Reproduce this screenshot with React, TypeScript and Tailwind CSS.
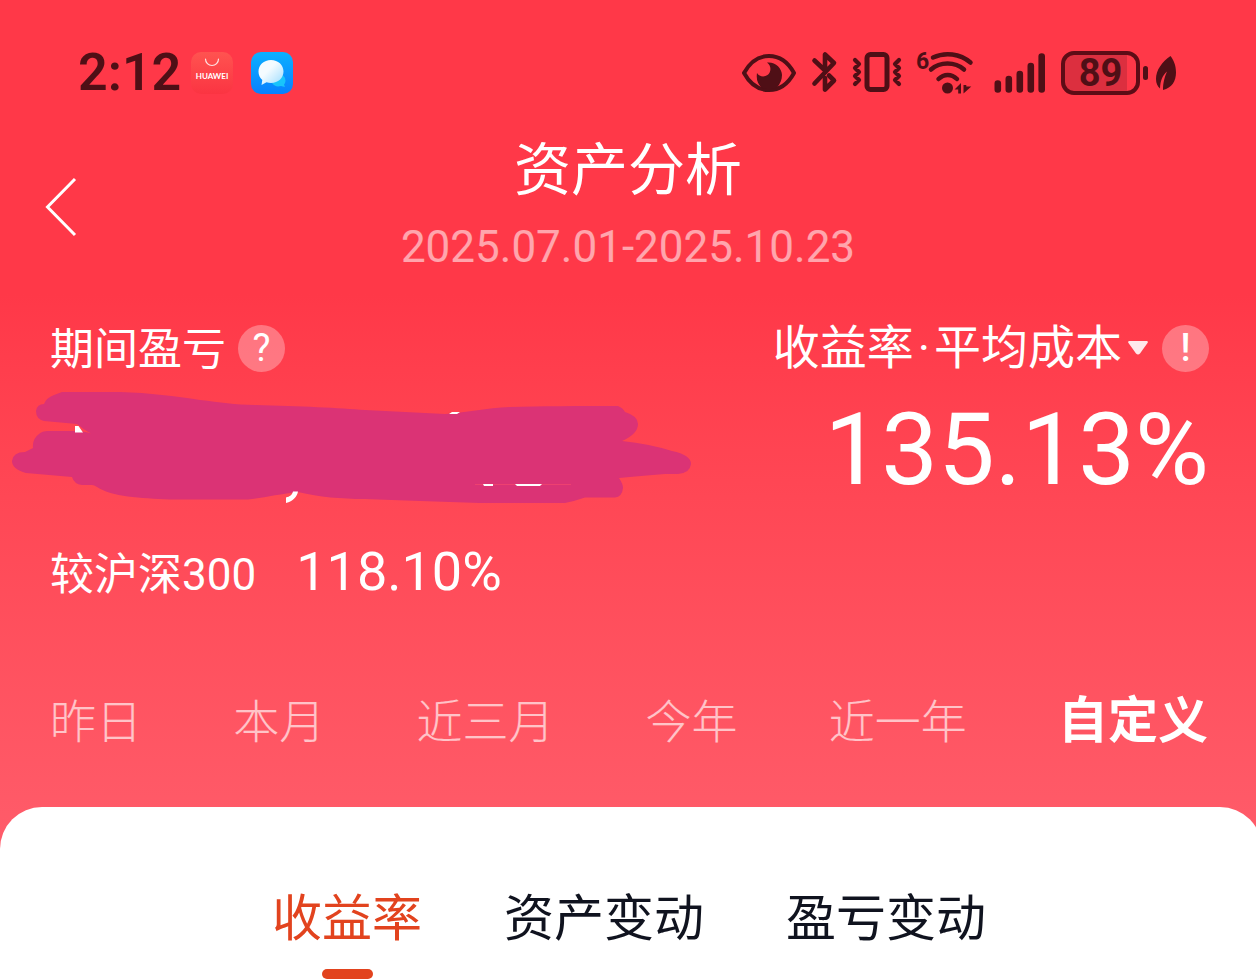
import React, { useState } from 'react';

const PERIODS = ['昨日', '本月', '近三月', '今年', '近一年', '自定义'];
const SECTIONS = ['收益率', '资产变动', '盈亏变动'];

const HuaweiIcon = () => (
  <svg viewBox="0 0 42 42" className="h-[42px] w-[42px]" aria-hidden="true">
    <defs>
      <linearGradient id="huawei" x1="0" y1="0" x2="0" y2="1">
        <stop offset="0" stopColor="#ff5350" />
        <stop offset="1" stopColor="#fb3442" />
      </linearGradient>
    </defs>
    <rect width="42" height="42" rx="10" fill="url(#huawei)" />
    <path d="M14.5 7a6.5 6.5 0 0 0 13 0" fill="none" stroke="#ffe3e3" strokeWidth="1.2" strokeLinecap="round" />
    <text x="21" y="27" textAnchor="middle" fontSize="8" fontWeight="700" fill="#fff" fontFamily="Lato, sans-serif">HUAWEI</text>
  </svg>
);

const MessagesIcon = () => (
  <svg viewBox="0 0 42 42" className="h-[42px] w-[42px]" aria-hidden="true">
    <defs>
      <linearGradient id="msgBg" x1="0" y1="0" x2="0" y2="1">
        <stop offset="0" stopColor="#0cb0ff" />
        <stop offset="1" stopColor="#0880ff" />
      </linearGradient>
      <linearGradient id="msgBubble" x1="0" y1="0" x2="1" y2="1">
        <stop offset="0.4" stopColor="#f4fbff" />
        <stop offset="1" stopColor="#9bdcff" />
      </linearGradient>
    </defs>
    <rect width="42" height="42" rx="10" fill="url(#msgBg)" />
    <path d="M28 22a7 6.500 0 0 1 6.500 6.500c0 1.500-.6 3-1.500 4l1 2.500-4-1a8 8 0 0 1-9-3z" fill="#19c4fb" />
    <path d="M20 8c7.200 0 12.500 5 12.500 11.500S27.200 31 20 31c-1.500 0-3-.2-4.500-.7L10.500 33l.8-5C8.800 26 7.500 23 7.500 19.500 7.500 13 12.800 8 20 8z" fill="url(#msgBubble)" />
  </svg>
);

const EyeIcon = () => (
  <svg viewBox="0 0 54 38" className="h-[38px] w-[54px]" aria-hidden="true">
    <path d="M2 19C8 8 17 2 27 2s19 6 25 17c-6 11-15 17-25 17S8 30 2 19z" fill="none" stroke="currentColor" strokeWidth="4" strokeLinejoin="round" />
    <path d="M25 8.500C33 7.500 40 14 40 21c0 5-2 9-5 12.500-5 2-11 2-15.500 0C16 30 14 26 15 19c2 3.500 7 4.500 10.500 2S30 12 25 8.500z" fill="currentColor" />
  </svg>
);

const BluetoothIcon = () => (
  <svg viewBox="0 0 27 42" className="h-[42px] w-[27px]" aria-hidden="true">
    <g fill="none" stroke="currentColor" strokeWidth="4.600" strokeLinecap="round" strokeLinejoin="round">
      <path d="M3.500 9.500 13 18.500M3.500 32.500 23 12 14 3.500V20" />
      <path d="M18 24.500 23 29.500 14 38.500V27" />
    </g>
  </svg>
);

const VibrateIcon = () => (
  <svg viewBox="0 0 50 42" className="h-[42px] w-[50px]" aria-hidden="true">
    <g fill="none" stroke="currentColor" strokeLinecap="round" strokeLinejoin="round">
      <rect x="15" y="3.500" width="20" height="35" rx="3.500" strokeWidth="5" />
      <path d="m3 9 4 4-4 4 4 4-4 4 4 4-4 4M47 9l-4 4 4 4-4 4 4 4-4 4 4 4" strokeWidth="4.200" />
    </g>
  </svg>
);

const WifiIcon = () => (
  <svg viewBox="0 0 57 44" className="h-[44px] w-[57px] overflow-visible" aria-hidden="true">
    <text x="0" y="18" fontSize="23" fontWeight="700" fill="currentColor" fontFamily="Roboto, sans-serif">6</text>
    <g fill="none" stroke="currentColor" strokeWidth="4.500" strokeLinecap="round">
      <path d="M17 6.500C29 .8 44 2.500 54.500 11.500" />
      <path d="M15 18.500c9-8 24-8 33 0" />
      <path d="M22.500 28c5.500-5.500 13-5.500 18.500 0" />
    </g>
    <circle cx="31.500" cy="37" r="5.500" fill="currentColor" />
    <path d="M38.500 38.500 45 32v10.500h-2.800v-4zM47.500 42.500V34h2.800v1.500h5z" fill="currentColor" />
  </svg>
);

const SignalIcon = () => (
  <svg viewBox="0 0 52 42" className="h-[42px] w-[52px]" aria-hidden="true">
    <g stroke="currentColor" strokeWidth="6.600" strokeLinecap="round">
      <path d="M3.800 31.500v6M14.800 27v10.500M25.800 22v15.500M36.800 14v23.500M47.700 4.500v33" />
    </g>
  </svg>
);

const LeafIcon = () => (
  <svg viewBox="0 0 22 36" className="h-[36px] w-[22px]" aria-hidden="true">
    <path d="M15.500 1C7 7 1 15 1 24c0 4 1.500 7.500 4 9.500.3-8 2.500-13 7-17-2.500 6-4 11-4 18.500C17 33 21 26 21 17.500 21 10 18.500 5 15.500 1z" fill="currentColor" />
  </svg>
);

const StatusBar = () => (
  <div className="flex h-[88px] items-end justify-between pr-[79px] pl-[78px] text-[#4f0f16]">
    <div className="flex h-[44px] items-center">
      <span className="text-[52px] leading-[44px] font-semibold">2:12</span>
      <span className="ml-2.5 flex gap-[18px]">
        <HuaweiIcon />
        <MessagesIcon />
      </span>
    </div>
    <div className="flex h-[44px] items-center">
      <EyeIcon />
      <span className="ml-[15px] flex gap-[14px]">
        <BluetoothIcon />
        <VibrateIcon />
        <WifiIcon />
      </span>
      <span className="ml-[21px]"><SignalIcon /></span>
      <span className="ml-[15px] flex h-[44px] w-[79px] items-center justify-center rounded-[13px] border-4 border-[#5d0c16] bg-linear-to-r from-[#dc2f3f] from-88% to-[#ff3848] to-88% text-[38px] leading-[36px] font-bold">
        89
      </span>
      <span className="ml-[3px] h-[14px] w-[5px] rounded-full bg-[#4f0f16]" />
      <span className="ml-[7px]"><LeafIcon /></span>
    </div>
  </div>
);

// Marker strokes that hide the amount
const HiddenAmount = () => (
  <svg viewBox="10 388 684 120" className="mt-2.5 -ml-10 h-[120px] w-[684px]" role="img" aria-label="金额已隐藏">
    <path
      d="M62 392H120C150 393 175 396 200 400C220 402 235 405 255 405C300 406 340 408 365 410L445 414C470 412 485 408 510 407C540 406 580 406 618 406Q623 408 625 412Q638 416 638 424Q638 434 622 441Q650 444 672 451Q691 455 691 464Q690 473 678 474H665Q640 476 619 478Q623 484 623 488Q622 497 615 497.500H585Q575 501 565 503H480C440 502 400 500 365 499C340 499 320 497 298 492C280 494 262 498 248 499.500H170C140 498 112 497 97 487Q94 485 92 485H82Q74 484 72 477L26 473Q12 469 12 461Q13 452 25 452Q29 450 33 448Q32 439 39 434Q42 431 48 431H75Q85 431 91 433.500L85 430L77 424L44 421Q36 419 36 411Q37 404 44 404Q46 398 54 395Z"
      fill="#db3375"
    />
    <path d="M475 484.500H571" stroke="#ee4070" />
    <path d="M75 426h3.500l4.500 6.500h-8zM286 497.500c4-1 6-2.500 7-6h5c-1 5.500-5 9.500-12 11.500zM452 412h8l-3 2h-8zM483 484h10v2h-9zM515 484h27l-2 2h-23z" fill="#fff" />
  </svg>
);

const App: React.FC = () => {
  const [period, setPeriod] = useState('自定义');
  const [section, setSection] = useState('收益率');

  return (
    <div className="flex min-h-screen flex-col overflow-hidden bg-linear-to-b from-[#ff3848] from-30% to-[#ff5b69] to-85% pt-[7px] font-[Roboto,'Noto_Sans_CJK_SC',sans-serif] text-white" lang="zh-CN">
      <StatusBar />

      <header className="mt-[42px] flex items-center px-[44px]">
        <button type="button" aria-label="返回" className="w-[34px]">
          <svg viewBox="0 0 34 60" className="h-[60px] w-[34px]" aria-hidden="true">
            <path d="M31 2 3.500 30 31 58" fill="none" stroke="currentColor" strokeWidth="3" />
          </svg>
        </button>
        <div className="flex-1 text-center">
          <h1 className="text-[57px] leading-[68px]">资产分析</h1>
          <p className="mt-3 text-[44px] leading-[60px] text-white/55">2025.07.01-2025.10.23</p>
        </div>
        <span className="w-[34px]" />
      </header>

      <section className="mt-[41px] flex justify-between pr-[47px] pl-[50px]">
        <div>
          <div className="flex h-[60px] items-center gap-3">
            <span className="pt-1 text-[44px] leading-[60px]">期间盈亏</span>
            <button type="button" aria-label="期间盈亏说明" className="h-[47px] w-[47px] rounded-full bg-white/30 text-[38px] leading-[47px]">?</button>
          </div>
          <HiddenAmount />
        </div>
        <div className="flex flex-col items-end">
          <div className="flex h-[60px] items-center">
            <button type="button" className="flex items-center gap-1.5 text-[47px] leading-[60px]">
              <span>收益率<span className="mx-1">·</span>平均成本</span>
              <svg viewBox="0 0 20 14" className="h-[14px] w-5" aria-hidden="true">
                <path d="M1 0h18q1.500.500.500 2L12 12.500q-2 2-4 0L.500 2Q-.5.500 1 0z" fill="#ffe9eb" />
              </svg>
            </button>
            <button type="button" aria-label="收益率说明" className="ml-[14px] h-[47px] w-[47px] rounded-full bg-white/30 text-[38px] leading-[47px] font-medium">!</button>
          </div>
          <strong className="mt-3 text-[101px] leading-[120px] font-normal">135.13%</strong>
        </div>
      </section>

      <p className="mt-[30px] flex items-baseline gap-10 pl-[50px] leading-[64px]">
        <span className="text-[44px]">较沪深300</span>
        <span className="text-[54px]">118.10%</span>
      </p>

      <nav className="mt-[84px] flex items-baseline justify-between pr-12 pl-[50px] leading-[60px]">
        {PERIODS.map((p) => (
          <button
            key={p}
            type="button"
            onClick={() => setPeriod(p)}
            className={p === period ? 'text-[50px] font-bold' : 'text-[46px] font-light text-white/65'}
          >
            {p}
          </button>
        ))}
      </nav>

      <main className="mt-[55px] -mr-1.5 flex-1 rounded-t-[42px] bg-white pt-20 pr-1">
        <nav className="flex justify-center gap-[82px]">
          {SECTIONS.map((s) => (
            <button
              key={s}
              type="button"
              onClick={() => setSection(s)}
              className={`flex flex-col items-center text-[50px] leading-[64px] ${s === section ? 'text-[#e2431e]' : 'text-[#10131f]'}`}
            >
              {s}
              {s === section && <span className="mt-[18px] h-[10px] w-[51px] rounded-full bg-[#e2431e]" />}
            </button>
          ))}
        </nav>
      </main>
    </div>
  );
};

export default App;
